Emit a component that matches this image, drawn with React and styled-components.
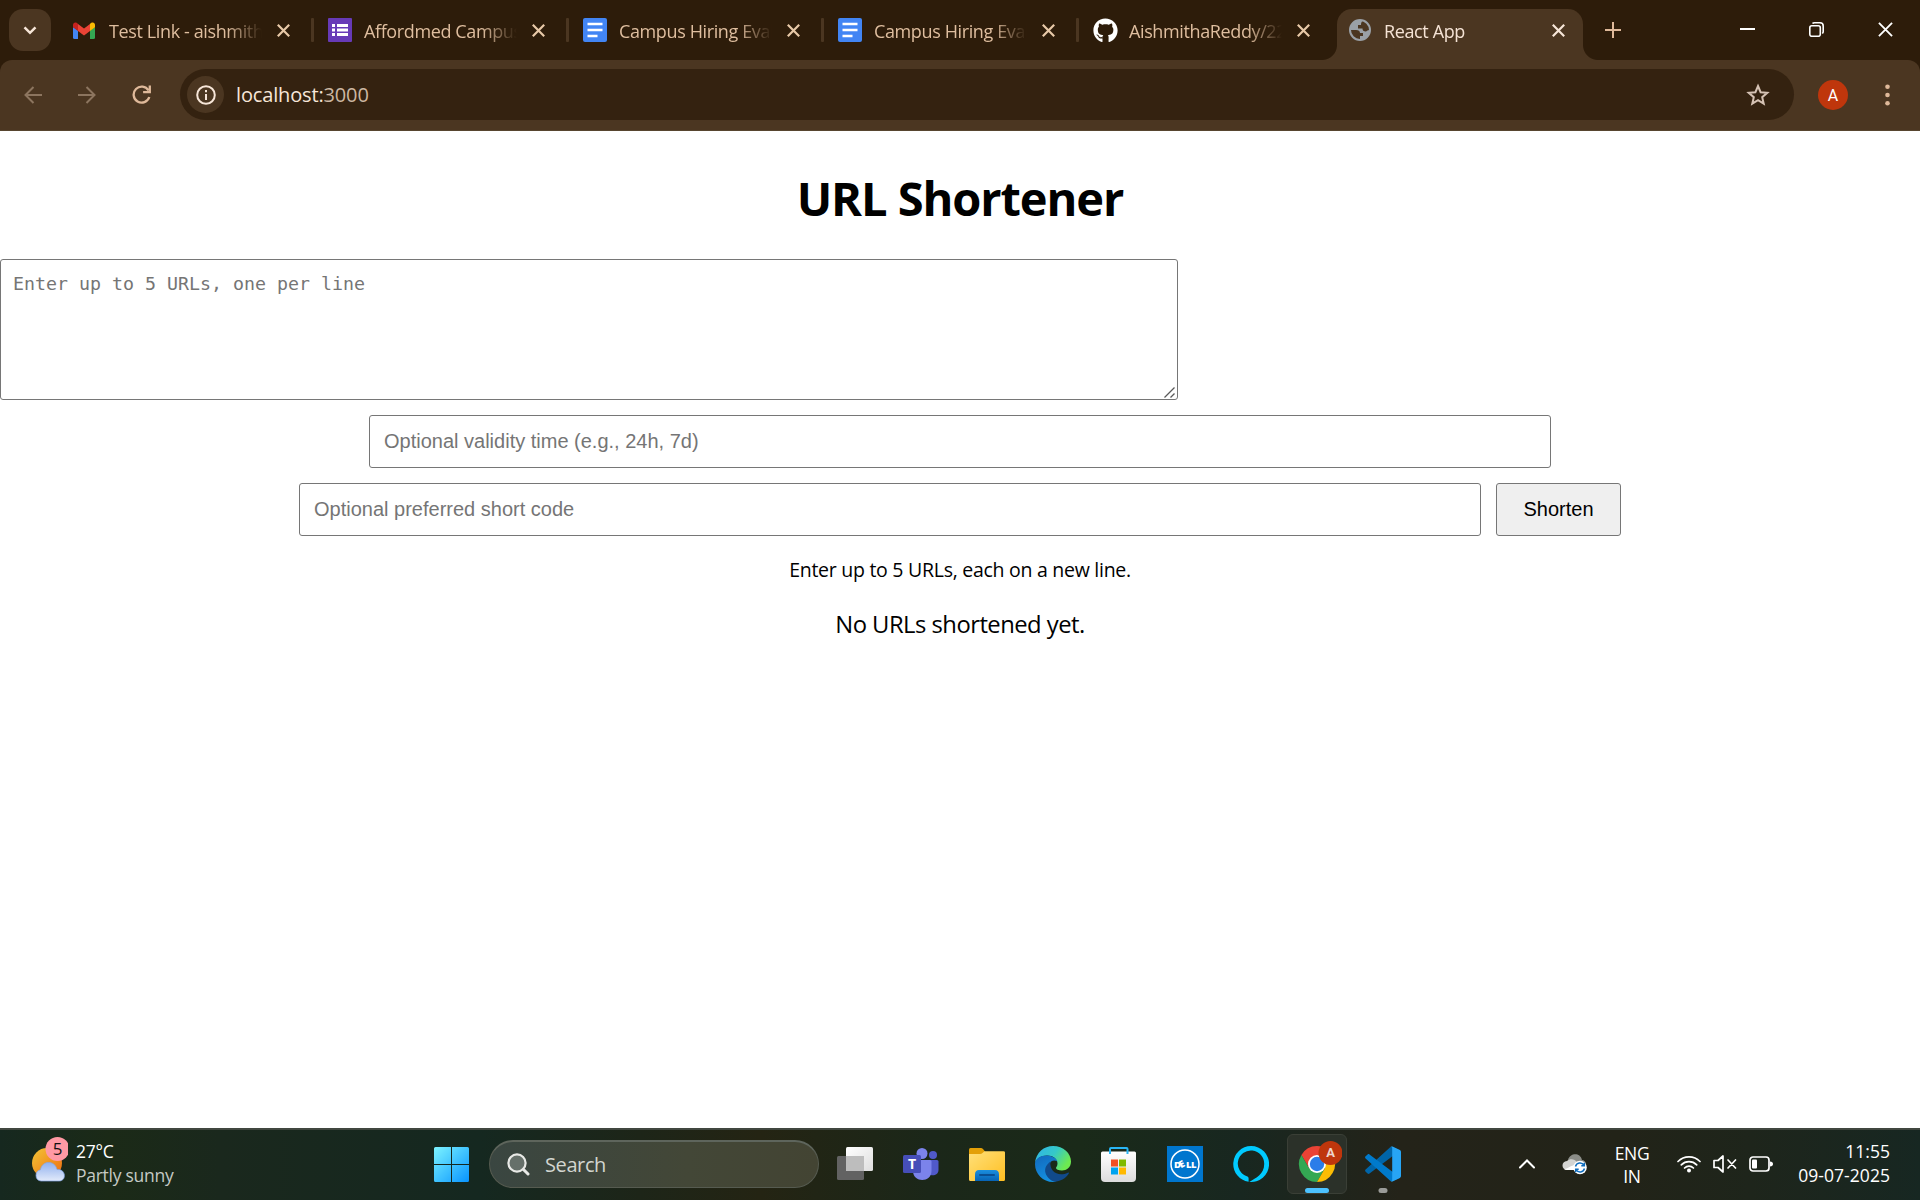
import React from 'react';
import styled, { createGlobalStyle, css } from 'styled-components';
import { FaGithub } from 'react-icons/fa';

const ui = '"Open Sans", "Noto Sans", sans-serif';

const GlobalStyle = createGlobalStyle`
  * { box-sizing: border-box; }
  html, body { margin: 0; background: #fff; overflow: hidden; }
  svg { display: block; flex: none; }
`;

const Screen = styled.div`
  width: 1920px;
  height: 1200px;
  display: flex;
  flex-direction: column;
  font-family: ${ui};
  overflow: hidden;
`;

/* ---------- Browser frame ---------- */

const Frame = styled.header`
  background: #2d1c0a;
  flex: none;
`;

const TabStrip = styled.div`
  height: 60px;
  padding: 9px 0 0 9px;
  display: flex;
  align-items: flex-start;
`;

const TabSearch = styled.button`
  width: 42px;
  height: 42px;
  margin: 0 11px 0 0;
  padding: 0;
  border: 0;
  border-radius: 14px;
  background: #4b3621;
  display: grid;
  place-items: center;
`;

const Tab = styled.div`
  position: relative;
  width: 246px;
  height: ${(p) => (p.$active ? 51 : 42)}px;
  padding: 0 0 ${(p) => (p.$active ? 9 : 0)}px 11px;
  display: flex;
  align-items: center;
  flex: none;
  color: ${(p) => (p.$active ? '#f5e3d5' : '#dfbe9f')};
  ${(p) =>
    p.$active &&
    css`
      background: #4b3621;
      border-radius: 15px 15px 0 0;
      &::before,
      &::after {
        content: '';
        position: absolute;
        bottom: 0;
        width: 15px;
        height: 15px;
      }
      &::before {
        left: -15px;
        background: radial-gradient(circle at 0 0, transparent 14.5px, #4b3621 15.5px);
      }
      &::after {
        right: -15px;
        background: radial-gradient(circle at 100% 0, transparent 14.5px, #4b3621 15.5px);
      }
    `}
`;

const TabIcon = styled.span`
  width: 24px;
  height: 24px;
  margin-right: 12px;
  display: grid;
  place-items: center;
  flex: none;
`;

const TabTitle = styled.span`
  width: 153px;
  flex: none;
  overflow: hidden;
  white-space: nowrap;
  font-size: 18px;
  line-height: 26px;
  letter-spacing: -0.38px;
  padding-top: 2px;
  mask-image: linear-gradient(90deg, #000 118px, transparent 153px);
`;

const CloseIcon = styled.span`
  width: 43px;
  display: grid;
  place-items: center;
`;

const Divider = styled.span`
  width: 3px;
  height: 24px;
  margin: 9px 3px;
  border-radius: 1px;
  background: ${(p) => (p.$hidden ? 'transparent' : '#4b3621')};
`;

const NewTab = styled.div`
  width: 42px;
  height: 42px;
  margin-left: 9px;
  display: grid;
  place-items: center;
`;

const WindowButtons = styled.div`
  margin-left: auto;
  height: 40px;
  display: flex;
`;

const WindowButton = styled.div`
  width: 69px;
  display: grid;
  place-items: center;
`;

const Toolbar = styled.div`
  height: 71px;
  padding: 0 18px 1px 15px;
  background: #4b3621;
  border-bottom: 1px solid #57452f;
  border-radius: 12px 12px 0 0;
  display: flex;
  align-items: center;
`;

const NavButton = styled.div`
  width: 36px;
  height: 36px;
  flex: none;
  margin-right: 18px;
  display: grid;
  place-items: center;
`;

const Omnibox = styled.div`
  width: 1614px;
  height: 51px;
  flex: none;
  margin-left: 3px;
  padding: 0 24px 0 7px;
  border-radius: 26px;
  background: #342210;
  display: flex;
  align-items: center;
`;

const SiteInfo = styled.span`
  width: 37px;
  height: 37px;
  border-radius: 50%;
  background: #4b3621;
  display: grid;
  place-items: center;
`;

const Address = styled.span`
  flex: 1;
  margin-left: 12px;
  padding-top: 1px;
  font-size: 20px;
  line-height: 28px;
  letter-spacing: -0.15px;
  color: #f7e6d8;
  span { color: #ccb7a2; }
`;

const Avatar = styled.div`
  width: 30px;
  height: 30px;
  flex: none;
  margin: 0 24px;
  border-radius: 50%;
  background: #bf360c;
  color: #fff;
  font: 16px/31px Roboto, sans-serif;
  text-align: center;
`;

const MenuDots = styled.div`
  width: 30px;
  flex: none;
  display: grid;
  place-items: center;
`;

/* ---------- Page ---------- */

const Page = styled.main`
  flex: 1;
  background: #fff;
  color: #000;
  display: flex;
  flex-direction: column;
  align-items: center;
`;

const Title = styled.h1`
  margin: 35px 0 29px;
  font-size: 47px;
  line-height: 64px;
  font-weight: 700;
  letter-spacing: -1.08px;
`;

const field = css`
  margin: 0;
  border: 1px solid #767676;
  border-radius: 3px;
  background: #fff;
  outline: 0;
  &::placeholder { color: #757575; opacity: 1; }
`;

const AreaBox = styled.div`
  position: relative;
  align-self: flex-start;
  display: flex;
`;

const UrlArea = styled.textarea`
  ${field}
  width: 1178px;
  height: 141px;
  padding: 12px;
  font: 18.28px/24px "DejaVu Sans Mono", monospace;
  resize: none;
`;

const Grip = styled.svg`
  position: absolute;
  right: 3px;
  bottom: 2px;
`;

const FormRow = styled.div`
  display: flex;
  gap: 15px;
  margin-top: 15px;
`;

const TextField = styled.input`
  ${field}
  width: 1182px;
  height: 53px;
  padding: 0 14px;
  font: 20px "Liberation Sans", Arial, sans-serif;
`;

const Submit = styled.button`
  width: 125px;
  height: 53px;
  padding: 0;
  border: 1px solid #767676;
  border-radius: 3px;
  background: #efefef;
  color: #000;
  font: 20px "Liberation Sans", Arial, sans-serif;
`;

const Hint = styled.p`
  margin: 20px 0 24px;
  font-size: 19.5px;
  line-height: 28px;
  letter-spacing: -0.27px;
`;

const Empty = styled.p`
  margin: 0;
  font-size: 23.8px;
  line-height: 32px;
  letter-spacing: -0.52px;
`;

/* ---------- Taskbar ---------- */

const Taskbar = styled.footer`
  height: 72px;
  flex: none;
  padding: 0 30px 2px 32px;
  border-top: 2px solid #414740;
  background: linear-gradient(90deg, #16281f 0, #1b2a17 110px, #1a281d 220px, #152820 480px, #1d2518 640px,
    #242413 760px, #1b2719 930px, #1a2a19 1080px, #182720 1240px, #242319 1400px, #222318 1620px, #1e251b 1750px, #172722 1920px);
  color: #fff;
  display: flex;
  align-items: center;
`;

const Weather = styled.div`
  display: flex;
  align-items: center;
  width: 388px;
  gap: 8px;
`;

const WeatherText = styled.div`
  padding-bottom: 2px;
  font-size: 17.5px;
  line-height: 24px;
  letter-spacing: -0.27px;
  div + div { color: #c5cac5; }
`;

const Start = styled.div`
  width: 69px;
  padding-left: 14px;
`;

const Search = styled.div`
  width: 330px;
  height: 48px;
  padding-left: 17px;
  display: flex;
  align-items: center;
  gap: 15px;
  border: 1px solid #565b50;
  border-top: 2px solid #5e655c;
  border-radius: 24px;
  background: linear-gradient(90deg, #3a4641, #434737 60%, #434433);
  color: #d3d6d0;
  font-size: 20px;
  letter-spacing: -0.4px;
`;

const Apps = styled.div`
  display: flex;
  gap: 6px;
  margin-left: 6px;
`;

const AppButton = styled.div`
  position: relative;
  width: 60px;
  height: 60px;
  border-radius: 6px;
  display: grid;
  place-items: center;
  border: 1px solid ${(p) => (p.$open ? '#3a3f36' : 'transparent')};
  background: ${(p) => (p.$open ? '#2b3129' : 'transparent')};
`;

const Indicator = styled.span`
  position: absolute;
  bottom: 0;
  left: 50%;
  transform: translateX(-50%);
  width: ${(p) => (p.$wide ? 24 : 9)}px;
  height: 5px;
  border-radius: 3px;
  background: ${(p) => (p.$wide ? '#4cc2ff' : '#9a9b98')};
`;

const Tray = styled.div`
  margin-left: auto;
  display: flex;
  align-items: center;
  font-size: 17.5px;
  line-height: 24px;
  letter-spacing: -0.3px;
`;

const Overflow = styled.span`
  margin-right: 27px;
`;

const Language = styled.div`
  width: 60px;
  margin: 0 15px;
  padding-top: 2px;
  text-align: center;
  line-height: 23px;
`;

const Status = styled.div`
  display: flex;
  align-items: center;
  gap: 12px;
`;

const Clock = styled.div`
  width: 117px;
  padding-bottom: 2px;
  text-align: right;
  letter-spacing: 0.05px;
`;

const Cross = ({ color, size = 13, width = 2.2 }) => (
  <svg width={size} height={size} viewBox="0 0 13 13" stroke={color} strokeWidth={width} fill="none">
    <path d="M.8.8 12.2 12.2M12.2.8.8 12.2" />
  </svg>
);

const Gmail = () => (
  <svg width="24" height="17" viewBox="0 0 24 17">
    <path fill="#4285f4" d="M0 5v10.500Q0 17 1.500 17H5V8.500z" />
    <path fill="#34a853" d="M17 8.500V17h3.500q1.500 0 1.500-1.500V5z" />
    <path fill="#fbbc04" d="M17 2v7l5-3.800V3c0-2.700-3-3.400-5-1z" />
    <path fill="#ea4335" d="M5 9V2l6 4.600L17 2v7l-6 4.600z" />
    <path fill="#c5221f" d="M0 3v2.200L5 9V2C3-.4 0 .3 0 3z" />
  </svg>
);

const Forms = () => (
  <svg width="24" height="24" viewBox="0 0 24 24">
    <rect width="24" height="24" rx="1" fill="#673ab7" />
    <path stroke="#fff" strokeWidth="3" d="M4 7.500h3M9 7.500h11M4 12h3M9 12h11M4 16.500h3M9 16.500h11" />
  </svg>
);

const Docs = () => (
  <svg width="24" height="24" viewBox="0 0 24 24">
    <rect width="24" height="24" rx="2" fill="#4285f4" />
    <path stroke="#fff" strokeWidth="2.700" d="M4.500 6h15M4.500 12h15M4.500 18h10" />
  </svg>
);

const Globe = () => (
  <svg width="22" height="22" viewBox="0 0 22 22">
    <circle cx="11" cy="11" r="10" fill="#4b3621" stroke="#9aa0a6" strokeWidth="2" />
    <path fill="#9aa0a6" d="M11 1C5 1 1 5.500 1 11h6c2.500 0 4 1.200 4 3h3v3h-3v4c6 0 10-4.500 10-10-2-.2-2.800.6-4 1.500-2.600 0-3.500-1-3.500-3H9V6h3c0-2 .500-3.500 2-4.500z" />
  </svg>
);

const tabs = [
  { title: 'Test Link - aishmithareddy', icon: <Gmail /> },
  { title: 'Affordmed Campus Hiring', icon: <Forms /> },
  { title: 'Campus Hiring Evaluation', icon: <Docs /> },
  { title: 'Campus Hiring Evaluation', icon: <Docs /> },
  { title: 'AishmithaReddy/2200', icon: <FaGithub size={25} color="#fff" /> },
  { title: 'React App', icon: <Globe />, active: true },
];

const WeatherIcon = () => (
  <svg width="36" height="56" viewBox="0 0 36 56" fontFamily="Open Sans, sans-serif">
    <defs>
      <linearGradient id="sun" x1="0" y1="0" x2="1" y2="1">
        <stop offset="0" stopColor="#f3c535" />
        <stop offset="1" stopColor="#ee6a10" />
      </linearGradient>
      <linearGradient id="cloud" x1="0" y1="0" x2="0" y2="1">
        <stop offset="0" stopColor="#8fb0ee" />
        <stop offset="1" stopColor="#e2eafa" />
      </linearGradient>
    </defs>
    <circle cx="15" cy="27" r="15" fill="url(#sun)" />
    <path fill="url(#cloud)" stroke="#83a5e6" strokeWidth=".7" d="M9 45a5.700 5.700 0 0 1-.6-11.200C10 24 23 24 25 33.500 34 32.500 35 45 27 45z" />
    <circle cx="25.500" cy="13" r="12" fill="#ff99a4" />
    <text x="25.500" y="19" fontSize="17" textAnchor="middle" fill="#111">5</text>
  </svg>
);

const StartLogo = () => (
  <svg width="35" height="35" viewBox="0 0 35 35">
    <defs>
      <linearGradient id="win" gradientUnits="userSpaceOnUse" x1="0" y1="0" x2="35" y2="35">
        <stop offset="0" stopColor="#7df3ff" />
        <stop offset=".5" stopColor="#41c4ff" />
        <stop offset="1" stopColor="#0894ff" />
      </linearGradient>
    </defs>
    <path fill="url(#win)" d="M1.500 0H17v17H0V1.500Q0 0 1.500 0zM18 0h15.500Q35 0 35 1.500V17H18zM0 18h17v17H1.500Q0 35 0 33.500zM18 18h17v15.500q0 1.500-1.500 1.500H18z" />
  </svg>
);

const TaskView = () => (
  <svg width="36" height="36" viewBox="0 0 36 36">
    <defs>
      <linearGradient id="tv" x1="0" y1="0" x2="1" y2="1">
        <stop offset="0" stopColor="#fff" />
        <stop offset="1" stopColor="#dedede" />
      </linearGradient>
    </defs>
    <rect x="0" y="10" width="27" height="24" rx="1.500" fill="#626262" />
    <rect x="9" y="1" width="27" height="24" rx="1.500" fill="url(#tv)" />
    <path fill="#bdbdbd" d="M9 10h18v15H9z" />
  </svg>
);

const Teams = () => (
  <svg width="36" height="36" viewBox="0 0 36 36" fontFamily="Open Sans, sans-serif">
    <circle cx="30" cy="9" r="4" fill="#5059c9" />
    <path fill="#5059c9" d="M24 14h10q1.500 0 1.500 1.500V24c0 7-11.500 7-11.500 0z" />
    <circle cx="19" cy="7.500" r="5.500" fill="#7b83eb" />
    <path fill="#7b83eb" d="M10 14h17q1.500 0 1.500 1.500V25c0 12-18.500 12-18.500 0z" />
    <rect x="0" y="9" width="18" height="18" rx="1.500" fill="#464eb8" />
    <text x="9" y="23" fontSize="14" fontWeight="700" textAnchor="middle" fill="#fff">T</text>
  </svg>
);

const Explorer = () => (
  <svg width="36" height="36" viewBox="0 0 36 36">
    <defs>
      <linearGradient id="fold" x1="0" y1="0" x2="1" y2="1">
        <stop offset="0" stopColor="#ffe07a" />
        <stop offset="1" stopColor="#ffbf22" />
      </linearGradient>
      <linearGradient id="foldb" x1="0" y1="0" x2="0" y2="1">
        <stop offset="0" stopColor="#1b8fdf" />
        <stop offset="1" stopColor="#0764b5" />
      </linearGradient>
    </defs>
    <path fill="#e3a008" d="M0 3.500Q0 2 1.500 2H12q1 0 2 1l2 2.500V9H0z" />
    <path fill="url(#fold)" d="M0 8h11q1.500 0 2.500-1l2-1.800H34.500Q36 5.200 36 6.500V33.500Q36 35 34.500 35h-33Q0 35 0 33.500z" />
    <path fill="url(#foldb)" d="M6 35v-6.500Q6 24 10 24h16q4 0 4 4.500V35z" />
    <path stroke="#0a4f92" strokeWidth="2" strokeLinecap="round" d="M11 29h14" />
  </svg>
);

const Edge = () => (
  <svg width="36" height="36" viewBox="0 0 36 36">
    <defs>
      <linearGradient id="e1" x1="0" y1="0" x2="1" y2=".5">
        <stop offset="0" stopColor="#2fb3ea" />
        <stop offset=".55" stopColor="#35c8c8" />
        <stop offset="1" stopColor="#6dea50" />
      </linearGradient>
      <linearGradient id="e2" x1="0" y1="0" x2=".4" y2="1">
        <stop offset="0" stopColor="#1268bd" />
        <stop offset="1" stopColor="#1490e0" />
      </linearGradient>
    </defs>
    <path fill="url(#e1)" d="M0 17C1 6.500 9 0 18 0c10.500 0 18 7.500 18 15.500 0 6-4.500 9-9 9-3.500 0-6-1-6-2.500 0-1 1.500-1.500 1.500-4.500C22.500 13 18 9.500 12 9.500 6 9.500 1.500 12.500 0 17z" />
    <path fill="url(#e2)" d="M0 18C0 12.500 5.500 9.500 11.500 9.500c5.500 0 9.500 2.500 11 6-2.500-1.700-6-1.500-7.500 1.500-3 5 2 13 9 14 1.500 1.500-2 4.700-6 5C8 36 0 28 0 18z" />
    <path fill="#114a8b" d="M15.500 15.500C12 18 9 22 10.500 27c1.500 5 6.500 9 11 8.600C27.500 34.500 32 31 33.800 27.500c.4-.8-.3-1.200-1-.8C23 31.500 14 25 15.500 15.500z" />
  </svg>
);

const Store = () => (
  <svg width="36" height="36" viewBox="0 0 36 36">
    <defs>
      <linearGradient id="bag" x1="0" y1="0" x2="0" y2="1">
        <stop offset="0" stopColor="#fff" />
        <stop offset="1" stopColor="#dcdcdc" />
      </linearGradient>
    </defs>
    <path fill="url(#bag)" d="M1.500 5.500h32q1.500 0 1.500 1.500v25q0 4-4 4H4q-4 0-4-4V7q0-1.500 1.500-1.500z" />
    <path fill="none" stroke="#29b6f6" strokeWidth="2" d="M9 8V3q0-1 1-1h15.500q1 0 1 1v5" />
    <path fill="#f25022" d="M10 13.500h7v7h-7z" />
    <path fill="#7fba00" d="M18 13.500h7v7h-7z" />
    <path fill="#00a4ef" d="M10 21.500h7v7h-7z" />
    <path fill="#ffb900" d="M18 21.500h7v7h-7z" />
  </svg>
);

const Dell = () => (
  <svg width="36" height="36" viewBox="0 0 36 36" fontFamily="Open Sans, sans-serif" fontSize="9.500" fontWeight="800" fill="#fff">
    <path fill="#0076ce" d="M0 0h36v36H0z" />
    <circle cx="18" cy="18" r="14" fill="none" stroke="#fff" strokeWidth="1.500" />
    <text x="7 14 19 24" y="21.500 22.300 21.500 21.500" rotate="0 -28 0 0">DELL</text>
  </svg>
);

const Alexa = () => (
  <svg width="36" height="36" viewBox="0 0 36 36">
    <path fill="#00caff" fillRule="evenodd" d="M18 0a18 18 0 0 0-2.400 35.800v-3.600c0-.8-.5-1.500-1.200-1.800A13.200 13.200 0 1 1 31.200 18c0 10-8 14-15 17.900A18 18 0 1 0 18 0z" />
  </svg>
);

const ChromeLogo = () => (
  <svg width="50" height="46" viewBox="-2 0 50 46" fontFamily="Roboto, sans-serif">
    <path fill="#ea4335" d="M7.400 14A18 18 0 0 1 38.600 14H23a9 9 0 0 0-8 5z" />
    <path fill="#ea4335" d="M7.400 14 15.200 27.500 23 23V14z" />
    <path fill="#34a853" d="M7.400 14A18 18 0 0 0 23 41l7.800-13.500L23 23l-7.800 4.500z" />
    <path fill="#fbbc04" d="M38.600 14A18 18 0 0 1 23 41l7.800-13.500V14z" />
    <circle cx="23" cy="23" r="9" fill="#fff" />
    <circle cx="23" cy="23" r="7.200" fill="#2b7de9" />
    <circle cx="36.500" cy="12" r="12" fill="#bf360c" />
    <text x="36.500" y="15.500" fontSize="13" fontWeight="700" textAnchor="middle" fill="#eed6cc">A</text>
  </svg>
);

const VSCode = () => (
  <svg width="36" height="36" viewBox="0 0 36 36">
    <path fill="#0065a9" d="M35 4.500 27.500 1c-.9-.4-1.900-.2-2.600.5L.6 23.500c-.7.600-.7 1.600 0 2.200l2 1.800c.5.500 1.300.5 1.900.1L33.400 5.800c1-.7 2.400 0 2.400 1.200z" />
    <path fill="#007acc" d="M35 31.500 27.500 35c-.9.400-1.900.2-2.600-.5L.6 12.500c-.7-.600-.7-1.600 0-2.200l2-1.800c.5-.5 1.300-.5 1.900-.1l28.900 21.800c1 .7 2.400 0 2.400-1.200z" />
    <path fill="#27a5f5" d="M27.500 35.400c-1 .4-2 .1-2.700-.6.900.9 2.400.300 2.400-1V2.200c0-1.300-1.500-1.900-2.400-1 .7-.7 1.700-1 2.700-.6L34.900 4c.7.400 1.100 1.100 1.100 1.900v24.200c0 .8-.4 1.500-1.100 1.900z" />
  </svg>
);

const apps = [
  { icon: <TaskView /> },
  { icon: <Teams /> },
  { icon: <Explorer /> },
  { icon: <Edge /> },
  { icon: <Store /> },
  { icon: <Dell /> },
  { icon: <Alexa /> },
  { icon: <ChromeLogo />, open: true, running: true },
  { icon: <VSCode />, running: true },
];

const TrayCloud = () => (
  <svg width="25" height="22" viewBox="0 0 25 22">
    <path fill="#8b8d88" d="M6 7C8 0 18-1 20 7c2 0 4 2 4 4l-12 2z" />
    <path fill="#d4d4d2" d="M5 17C-1 17-1 8 5 8c3-3 8-2 10 1l-4 8z" />
    <path fill="#fff" d="M2 16c4 0 7-4 11-4v5H5q-2 0-3-1z" />
    <circle cx="18" cy="14.500" r="6.800" fill="#fff" />
    <path fill="none" stroke="#0f6cbd" strokeWidth="1.500" d="M13.500 13.500a4.600 4.600 0 0 1 8.500-1M22.500 15.500a4.600 4.600 0 0 1-8.500 1M22.300 9.800v3h-3M13.700 19.200v-3h3" />
  </svg>
);

const Wifi = () => (
  <svg width="24" height="18" viewBox="0 0 24 18" fill="none" stroke="#fff" strokeWidth="1.700" strokeLinecap="round">
    <path d="M1 6.500a15.500 15.500 0 0 1 22 0M4.300 9.800a10.900 10.900 0 0 1 15.400 0M7.600 13a6.200 6.200 0 0 1 8.800 0" />
    <circle cx="12" cy="15.500" r="2" fill="#fff" stroke="none" />
  </svg>
);

const Muted = () => (
  <svg width="24" height="18" viewBox="0 0 24 18" fill="none" stroke="#fff" strokeWidth="1.700" strokeLinecap="round" strokeLinejoin="round">
    <path d="M1 5.500h4L10 1v16l-5-4.500H1zM15 5l7.500 8M22.500 5 15 13" />
  </svg>
);

const Battery = () => (
  <svg width="24" height="16" viewBox="0 0 24 16">
    <rect x="1" y="1" width="19" height="14" rx="3" fill="none" stroke="#fff" strokeWidth="1.700" />
    <rect x="3" y="3.500" width="5" height="9" rx="1" fill="#fff" />
    <path fill="#fff" d="M21 5.500q3 .3 3 2.500t-3 2.500z" />
  </svg>
);

export default function App() {
  return (
    <Screen>
      <GlobalStyle />
      <Frame>
        <TabStrip>
          <TabSearch>
            <svg width="14" height="9" viewBox="0 0 14 9" fill="none" stroke="#f7e6d8" strokeWidth="2.500">
              <path d="m1.500 1.300 5.500 5.500 5.500-5.500" />
            </svg>
          </TabSearch>
          {tabs.map((tab, i) => (
            <React.Fragment key={i}>
              <Tab $active={tab.active}>
                <TabIcon>{tab.icon}</TabIcon>
                <TabTitle>{tab.title}</TabTitle>
                <CloseIcon>
                  <Cross color={tab.active ? '#f7e6d8' : '#e8c9a8'} />
                </CloseIcon>
              </Tab>
              {!tab.active && <Divider $hidden={i === 4} />}
            </React.Fragment>
          ))}
          <NewTab>
            <svg width="16" height="16" viewBox="0 0 16 16" stroke="#dfb99a" strokeWidth="2">
              <path d="M8 0v16M0 8h16" />
            </svg>
          </NewTab>
          <WindowButtons>
            <WindowButton>
              <svg width="15" height="2" viewBox="0 0 15 2"><path fill="#fff" d="M0 0h15v2H0z" /></svg>
            </WindowButton>
            <WindowButton>
              <svg width="15" height="15" viewBox="0 0 15 15" fill="none" stroke="#fff" strokeWidth="1.600">
                <rect x=".8" y="3.800" width="10.500" height="10.500" rx="2" />
                <path d="M3.500 1.500q.6-.7 2-.7H11q3.200 0 3.200 3.200v5.500q0 1.200-.9 2" />
              </svg>
            </WindowButton>
            <WindowButton><Cross color="#fff" size={15} width={1.6} /></WindowButton>
          </WindowButtons>
        </TabStrip>
        <Toolbar>
          <NavButton>
            <svg width="18" height="18" viewBox="0 0 18 18" fill="none" stroke="#8c755f" strokeWidth="2">
              <path d="M18 9H1.500M9.500 1 1.500 9l8 8" />
            </svg>
          </NavButton>
          <NavButton>
            <svg width="18" height="18" viewBox="0 0 18 18" fill="none" stroke="#8c755f" strokeWidth="2">
              <path d="M0 9h16.500M8.500 1l8 8-8 8" />
            </svg>
          </NavButton>
          <NavButton>
            <svg width="19" height="19" viewBox="0 0 19 19" fill="none" stroke="#dfb99a" strokeWidth="2.300">
              <path d="M16.500 5.500A8 8 0 1 0 17.300 12M17.800.5v6.700h-6.700" />
            </svg>
          </NavButton>
          <Omnibox>
            <SiteInfo>
              <svg width="20" height="20" viewBox="0 0 20 20" fill="none" stroke="#f7e6d8" strokeWidth="2">
                <circle cx="10" cy="10" r="8.800" />
                <path d="M10 9v6M10 5v2.200" />
              </svg>
            </SiteInfo>
            <Address>localhost:<span>3000</span></Address>
            <svg width="24" height="24" viewBox="0 0 24 24" fill="none" stroke="#d5c2b4" strokeWidth="2">
              <path d="m12 3 2.600 6.200 6.700.6-5.100 4.400 1.500 6.500L12 17.200l-5.700 3.500 1.500-6.500-5.100-4.400 6.700-.6z" />
            </svg>
          </Omnibox>
          <Avatar>A</Avatar>
          <MenuDots>
            <svg width="5" height="22" viewBox="0 0 5 22" fill="#dfb99a">
              <circle cx="2.500" cy="2.700" r="2.300" />
              <circle cx="2.500" cy="11" r="2.300" />
              <circle cx="2.500" cy="19.300" r="2.300" />
            </svg>
          </MenuDots>
        </Toolbar>
      </Frame>

      <Page>
        <Title>URL Shortener</Title>
        <AreaBox>
          <UrlArea placeholder="Enter up to 5 URLs, one per line" />
          <Grip width="11" height="11" viewBox="0 0 11 11" stroke="#5a5a5a" strokeWidth="1.300">
            <path d="M.5 10.500l10-10M6.500 10.500l4-4" />
          </Grip>
        </AreaBox>
        <FormRow>
          <TextField placeholder="Optional validity time (e.g., 24h, 7d)" />
        </FormRow>
        <FormRow>
          <TextField placeholder="Optional preferred short code" />
          <Submit>Shorten</Submit>
        </FormRow>
        <Hint>Enter up to 5 URLs, each on a new line.</Hint>
        <Empty>No URLs shortened yet.</Empty>
      </Page>

      <Taskbar>
        <Weather>
          <WeatherIcon />
          <WeatherText>
            <div>27°C</div>
            <div>Partly sunny</div>
          </WeatherText>
        </Weather>
        <Start><StartLogo /></Start>
        <Search>
          <svg width="23" height="23" viewBox="0 0 23 23" fill="#66706a" stroke="#e8e9e6" strokeWidth="2.200">
            <circle cx="10" cy="10" r="8.600" />
            <path strokeWidth="3" strokeLinecap="round" d="m16.500 16.500 4.500 4.500" />
          </svg>
          Search
        </Search>
        <Apps>
          {apps.map((app, i) => (
            <AppButton key={i} $open={app.open}>
              {app.icon}
              {app.running && <Indicator $wide={app.open} />}
            </AppButton>
          ))}
        </Apps>
        <Tray>
          <Overflow>
            <svg width="16" height="10" viewBox="0 0 16 10" fill="none" stroke="#fff" strokeWidth="2" strokeLinecap="round">
              <path d="m1 8.500 7-7 7 7" />
            </svg>
          </Overflow>
          <TrayCloud />
          <Language>ENG<br />IN</Language>
          <Status>
            <Wifi />
            <Muted />
            <Battery />
          </Status>
          <Clock>
            11:55
            <br />
            09-07-2025
          </Clock>
        </Tray>
      </Taskbar>
    </Screen>
  );
}
